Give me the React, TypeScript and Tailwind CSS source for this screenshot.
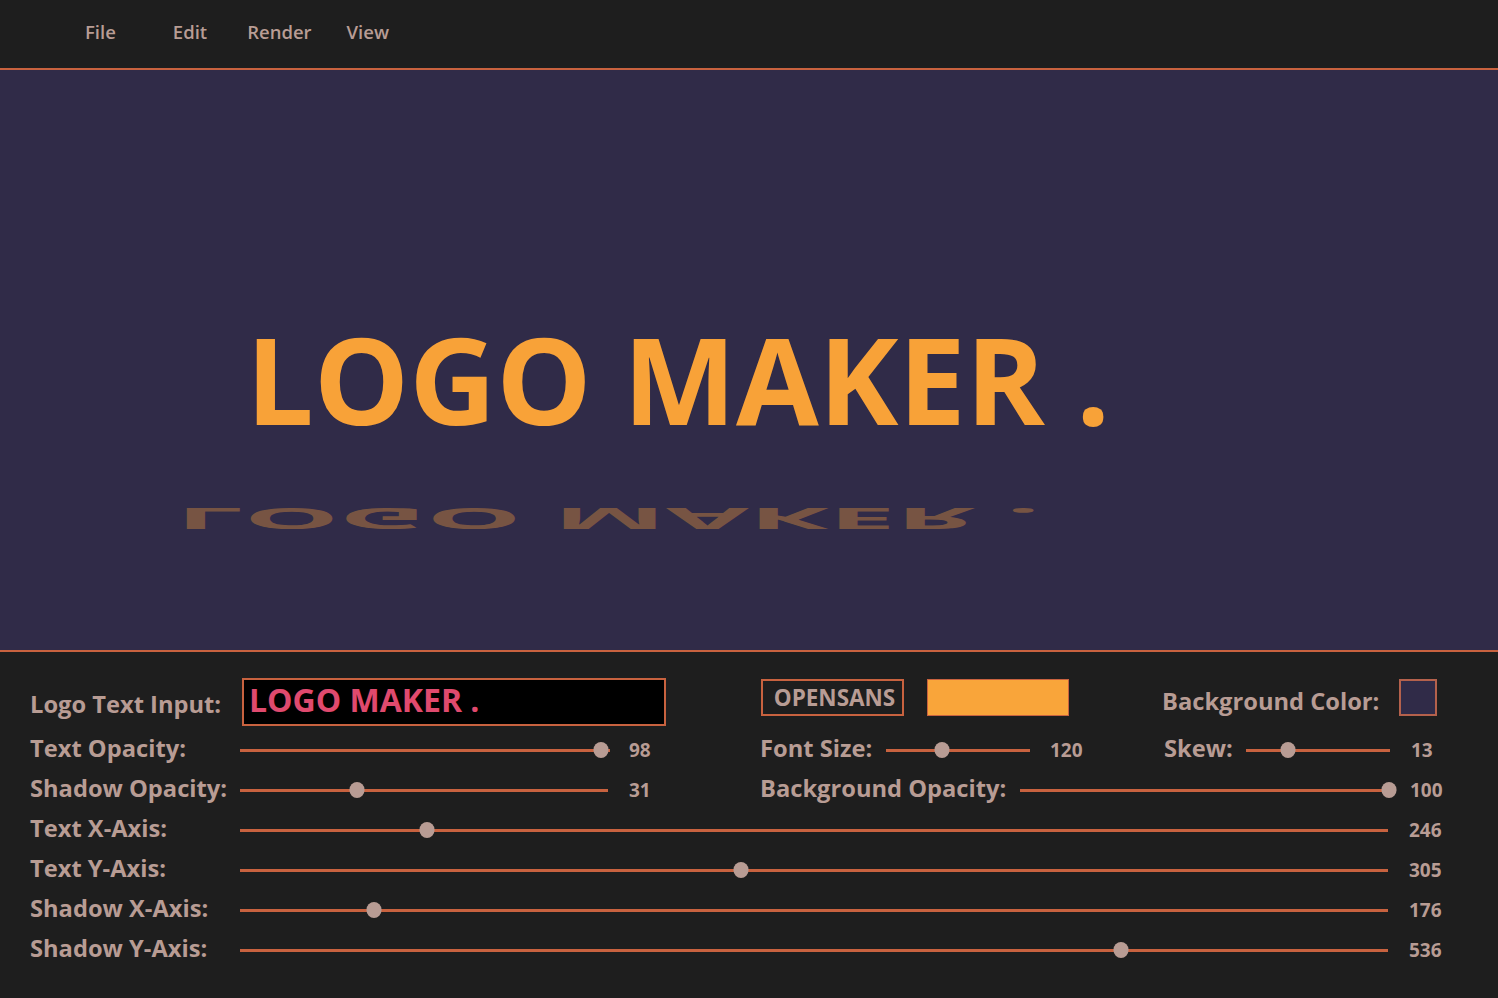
import React from "react";

const TXT = "text-[#b89c94]";

function Track({ width, pos }: { width?: string; pos: number }) {
  return (
    <div className={`relative h-4 flex items-center ${width ?? "flex-1"}`}>
      <div className="h-[3px] w-full bg-[#c8623f]" />
      <div
        className="absolute top-0 h-4 w-[15px] -translate-x-1/2 rounded-full bg-[#b89c94]"
        style={{ left: `${pos * 100}%` }}
      />
    </div>
  );
}

function Label({ children, w }: { children: React.ReactNode; w: string }) {
  return (
    <div className={`${w} mb-[3px] shrink-0 whitespace-nowrap text-[23.7px] font-bold leading-none ${TXT}`}>
      {children}
    </div>
  );
}

function Val({ children, w, pl }: { children: React.ReactNode; w: string; pl: string }) {
  return <div className={`${w} ${pl} shrink-0 text-[19px] font-bold leading-none ${TXT}`}>{children}</div>;
}

function FullRow({ label, pos, value }: { label: string; pos: number; value: string }) {
  return (
    <div className="flex h-10 items-center">
      <Label w="w-[210px]">{label}</Label>
      <Track pos={pos} />
      <Val w="w-[110px]" pl="pl-[21px]">{value}</Val>
    </div>
  );
}

export default function App() {
  return (
    <div className="flex h-[998px] w-[1498px] flex-col overflow-hidden bg-[#1e1e1e] font-['Open_Sans',sans-serif]">
      {/* menu bar */}
      <div className="flex h-[70px] shrink-0 items-center border-b-2 border-[#c8623f] pb-[4px]">
        <div className="flex items-center text-[18.5px] font-semibold text-[#b89c94]">
          <span className="ml-[85px]">File</span>
          <span className="ml-[57px]">Edit</span>
          <span className="ml-[40px]">Render</span>
          <span className="ml-[35px]">View</span>
        </div>
      </div>

      {/* canvas */}
      <div className="relative h-[582px] shrink-0 overflow-hidden border-b-2 border-[#c8623f] bg-[#302b48]">
        <div className="absolute left-[246px] top-[249px] whitespace-nowrap text-[120px] font-bold leading-none text-[#f8a238]">
          LOGO MAKER .
        </div>
        <div className="absolute left-[176px] top-[463px] origin-top whitespace-nowrap text-[120px] font-bold leading-none text-[#775443] [transform:scaleY(-0.233)]">
          LOGO MAKER .
        </div>
      </div>

      {/* controls */}
      <div className="flex flex-1 flex-col pl-[30px] pt-[26px]">
        <div className="flex h-12 items-center">
          <div className={`w-[212px] shrink-0 whitespace-nowrap pt-[6px] text-[23.7px] font-bold leading-none ${TXT}`}>
            Logo Text Input:
          </div>
          <div className="flex h-12 w-[424px] items-center border-2 border-[#c8623f] bg-black pb-[4px] pl-[5px] text-[32px] font-bold text-[#e04a6e]">
            LOGO MAKER .
          </div>
          <div className="ml-[95px] flex h-12 items-start pt-[1px]">
            <div className="flex h-[37px] w-[143px] items-center justify-center border-2 border-[#c8623f] pl-[4px] text-[22.5px] font-bold text-[#b89c94]">
              OPENSANS
            </div>
            <div className="ml-[23px] h-[37px] w-[142px] border border-[#c8623f] bg-[#f9a53a]" />
            <div className="ml-[93px] w-[237px] shrink-0 whitespace-nowrap pt-[11px] text-[23.7px] font-bold leading-none text-[#b89c94]">
              Background Color:
            </div>
            <div className="h-[37px] w-[38px] border-2 border-[#b4614c] bg-[#302b48]" />
          </div>
        </div>

        <div className="mt-1 flex h-10 items-center">
          <Label w="w-[210px]">Text Opacity:</Label>
          <Track width="w-[370px] shrink-0" pos={0.976} />
          <Val w="w-[150px]" pl="pl-[19px]">98</Val>
          <Label w="w-[126px]">Font Size:</Label>
          <Track width="w-[144px] shrink-0" pos={0.389} />
          <Val w="w-[134px]" pl="pl-[20px]">120</Val>
          <Label w="w-[82px]">Skew:</Label>
          <Track width="w-[144px] shrink-0" pos={0.292} />
          <Val w="w-[80px]" pl="pl-[21px]">13</Val>
        </div>

        <div className="flex h-10 items-center">
          <Label w="w-[210px]">Shadow Opacity:</Label>
          <Track width="w-[368px] shrink-0" pos={0.318} />
          <Val w="w-[152px]" pl="pl-[21px]">31</Val>
          <Label w="w-[260px]">Background Opacity:</Label>
          <Track width="w-[370px] shrink-0" pos={0.997} />
          <Val w="w-[80px]" pl="pl-[20px]">100</Val>
        </div>

        <FullRow label="Text X-Axis:" pos={0.163} value="246" />
        <FullRow label="Text Y-Axis:" pos={0.436} value="305" />
        <FullRow label="Shadow X-Axis:" pos={0.117} value="176" />
        <FullRow label="Shadow Y-Axis:" pos={0.767} value="536" />
      </div>
    </div>
  );
}
